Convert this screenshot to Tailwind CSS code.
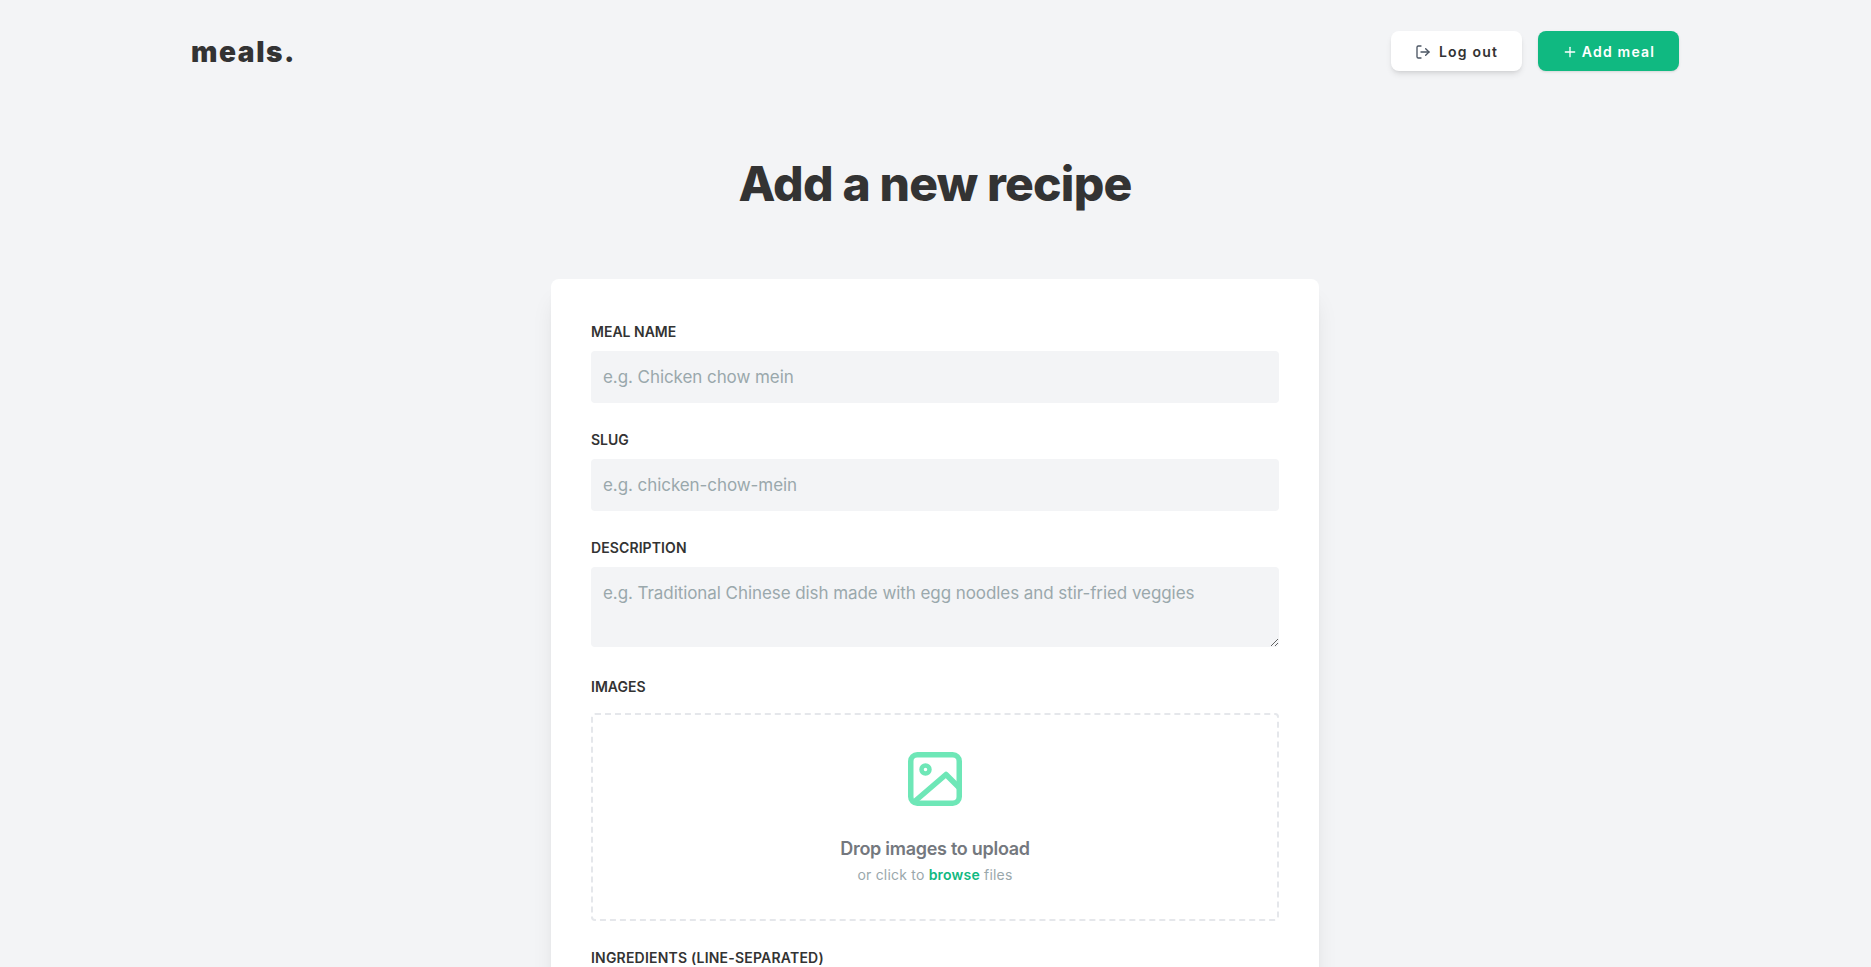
<!DOCTYPE html>
<html lang="en">
  <head>
    <meta charset="UTF-8" />
    <meta name="viewport" content="width=device-width, initial-scale=1.0" />
    <title>Add a new recipe</title>
    <script src="https://cdn.jsdelivr.net/npm/@tailwindcss/browser@4"></script>
  </head>
  <body class="h-screen overflow-hidden bg-[#f3f4f6] text-[#333333] font-['Inter',sans-serif]">
    <div class="w-[1870px]">
      <!-- Header -->
      <header class="mx-auto w-[1488px] pt-[31px] flex items-start justify-between">
        <a href="#" class="text-[28px] font-black tracking-[1.6px] leading-[42px]">meals.</a>
        <div class="flex items-center gap-4">
          <button class="h-10 w-[131px] pt-px flex items-center justify-center gap-2 rounded-lg bg-white text-sm font-semibold tracking-[1.2px] shadow-md">
            <svg class="w-4 h-4 text-[#4b5563]" viewBox="0 0 24 24" fill="none" stroke="currentColor" stroke-width="2" stroke-linecap="round" stroke-linejoin="round"><path d="M9 21H5a2 2 0 0 1-2-2V5a2 2 0 0 1 2-2h4"/><path d="m16 17 5-5-5-5"/><path d="M21 12H9"/></svg>
            Log out
          </button>
          <button class="h-10 w-[141px] pt-px flex items-center justify-center gap-1 rounded-lg bg-[#10b981] text-white text-sm font-semibold tracking-[1.2px] shadow-sm">
            <svg class="w-4 h-4" viewBox="0 0 24 24" fill="none" stroke="currentColor" stroke-width="2" stroke-linecap="round"><path d="M12 5v14"/><path d="M5 12h14"/></svg>
            Add meal
          </button>
        </div>
      </header>

      <h1 class="mt-[81px] text-center text-[48px] leading-[60px] font-extrabold tracking-[-0.8px]">Add a new recipe</h1>

      <!-- Recipe form -->
      <form class="mt-[65px] mx-auto w-[768px] rounded-lg bg-white p-10 shadow-xl">
        <div class="mb-6">
          <label class="block mb-1.5 text-sm leading-[26px] font-semibold uppercase">Meal name</label>
          <input type="text" placeholder="e.g. Chicken chow mein" class="block w-full h-[52px] px-3 rounded bg-[#f3f4f6] text-[17px] tracking-[-0.07px] placeholder:text-[#9aa8ac]" />
        </div>
        <div class="mb-6">
          <label class="block mb-1.5 text-sm leading-[26px] font-semibold uppercase">Slug</label>
          <input type="text" placeholder="e.g. chicken-chow-mein" class="block w-full h-[52px] px-3 rounded bg-[#f3f4f6] text-[17px] tracking-[-0.07px] placeholder:text-[#9aa8ac]" />
        </div>
        <div class="mb-[27px]">
          <label class="block mb-1.5 text-sm leading-[26px] font-semibold tracking-[0.1px] uppercase">Description</label>
          <textarea placeholder="e.g. Traditional Chinese dish made with egg noodles and stir-fried veggies" class="block w-full h-20 px-3 pt-3.5 pb-3 rounded bg-[#f3f4f6] text-[17px] tracking-[-0.07px] placeholder:text-[#9aa8ac]"></textarea>
        </div>
        <div class="mb-6">
          <label class="block mb-[13px] text-sm leading-[26px] font-semibold uppercase">Images</label>
          <div class="h-[208px] rounded border-2 border-dashed border-[#e5e7eb] flex flex-col items-center pt-[37px]">
            <svg class="w-[54px] h-[54px] text-[#6ee7b7]" viewBox="0 0 54 54" fill="none" stroke="currentColor" stroke-width="5.5" stroke-linejoin="round"><rect x="2.75" y="2.75" width="48.5" height="48.5" rx="6.5"/><circle cx="17.5" cy="17.5" r="4" stroke-width="4.5"/><path d="M6 50 38 22.5l14 14"/></svg>
            <p class="mt-[31px] text-lg leading-6 font-semibold tracking-[-0.28px] text-[#74787e]">Drop images to upload</p>
            <p class="mt-1 text-sm leading-5 tracking-[0.2px] text-[#9aa8ac]">or click to <span class="font-semibold text-[#10b981]">browse</span> files</p>
          </div>
        </div>
        <div>
          <label class="block mb-1.5 text-sm leading-[26px] font-semibold tracking-[0.2px] uppercase">Ingredients (line-separated)</label>
        </div>
      </form>
    </div>
  </body>
</html>
